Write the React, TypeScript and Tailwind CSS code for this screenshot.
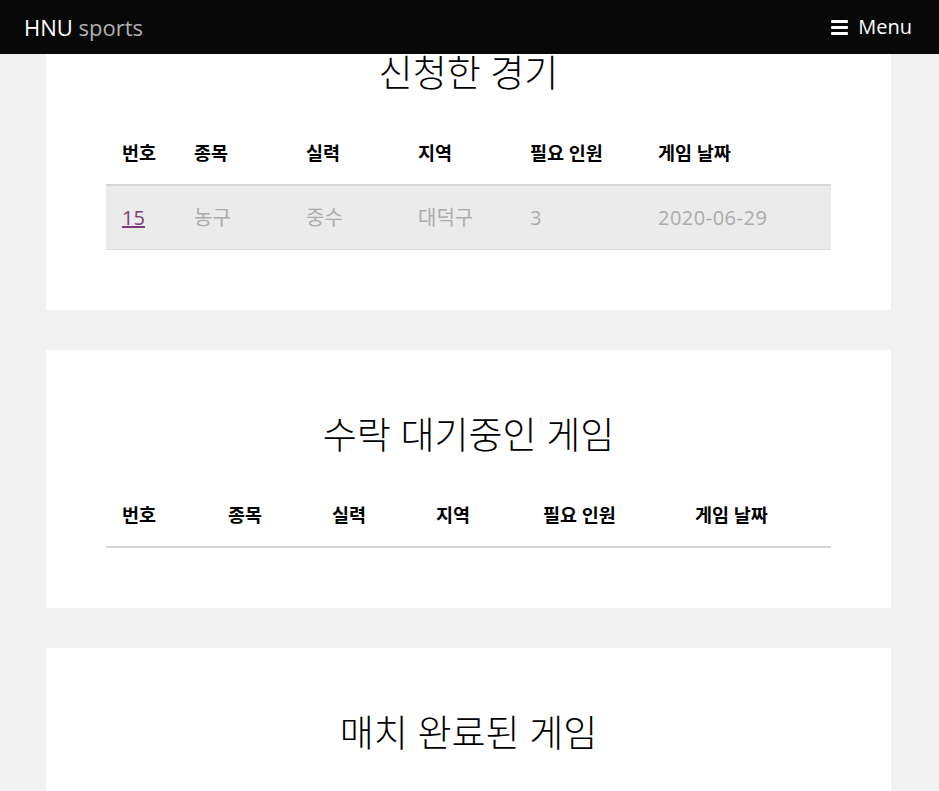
const font = { fontFamily: '"Open Sans", "Noto Sans CJK KR", sans-serif' }

const heads = ['번호', '종목', '실력', '지역', '필요 인원', '게임 날짜']

const HeaderRow = ({ cols }: { cols: string }) => (
  <div className={`grid ${cols} h-[64px] items-center border-b-2 border-[#d6d6d6] text-[18.5px] font-bold text-black`}>
    {heads.map((h) => (
      <div key={h} className="pl-4">{h}</div>
    ))}
  </div>
)

const Card = ({ title, children }: { title: string; children?: React.ReactNode }) => (
  <section className="ml-[46px] mr-[48px] bg-white px-[60px] pt-[64px] pb-[60px]">
    <h2 className="h-[42px] text-center text-[37px] leading-[42px] font-light text-black">{title}</h2>
    <div className="mt-[28px]">{children}</div>
  </section>
)

const App = () => {
  const cols1 = 'grid-cols-[72px_112px_112px_112px_128px_189px]'
  const cols2 = 'grid-cols-[106px_104px_104px_107px_152px_152px]'
  return (
    <div className="h-[791px] overflow-hidden bg-[#f1f1f1]" style={font}>
      <header className="fixed top-0 left-0 right-0 z-10 flex h-[54px] items-center justify-between bg-[#080808] pl-6 pr-[27px] text-white">
        <div className="text-[22px]">
          HNU <span className="text-[#b0b0b0]">sports</span>
        </div>
        <div className="flex items-center gap-[10px] text-[20px]">
          <svg width="17" height="15" viewBox="0 0 17 15" fill="white">
            <rect x="0" y="0" width="17" height="3" rx="1" />
            <rect x="0" y="6" width="17" height="3" rx="1" />
            <rect x="0" y="12" width="17" height="3" rx="1" />
          </svg>
          Menu
        </div>
      </header>

      <div className="-mt-[12px] flex flex-col gap-10">
        <Card title="신청한 경기">
          <HeaderRow cols={cols1} />
          <div className={`grid ${cols1} h-[64px] items-center border-b border-[#dddddd] bg-[#ebebeb] text-[20px] text-[#ababab]`}>
            <div className="pl-4">
              <a href="#" className="text-[#7b3a7b] underline">15</a>
            </div>
            <div className="pl-4">농구</div>
            <div className="pl-4">중수</div>
            <div className="pl-4">대덕구</div>
            <div className="pl-4">3</div>
            <div className="pl-4 tracking-[0.5px]">2020-06-29</div>
          </div>
        </Card>

        <Card title="수락 대기중인 게임">
          <HeaderRow cols={cols2} />
        </Card>

        <Card title="매치 완료된 게임" />
      </div>
    </div>
  )
}

export default App
